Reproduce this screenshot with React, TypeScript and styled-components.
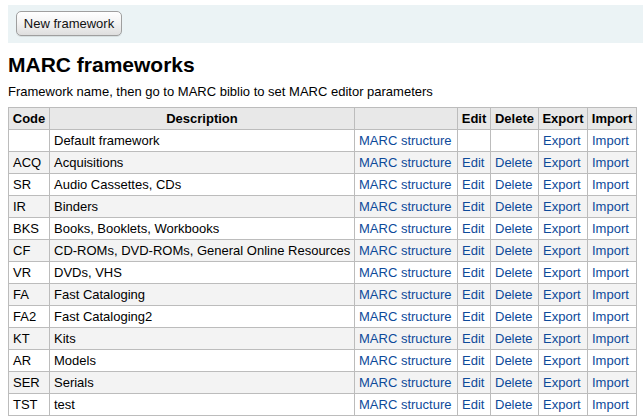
import React from "react";
import styled, { createGlobalStyle } from "styled-components";

const Global = createGlobalStyle`
  html, body { margin: 0; padding: 0; background: #fff; }
  body { font-family: "Liberation Sans", Arial, Helvetica, sans-serif; font-size: 13px; color: #000; }
`;

const Page = styled.div`
  display: flex;
  flex-direction: column;
  padding-top: 5px;
`;

const Toolbar = styled.div`
  margin-left: 8px;
  height: 38px;
  box-sizing: border-box;
  padding: 6px 8px;
  background: #ebf3f5;
  display: flex;
  align-items: flex-start;
`;

const Button = styled.button`
  height: 25px;
  width: 106px;
  box-sizing: border-box;
  border: 1px solid #9f9f9f;
  border-radius: 5px;
  background: linear-gradient(#ffffff, #f4f4f4 45%, #dedede);
  font-family: "Liberation Sans", Arial, Helvetica, sans-serif;
  font-size: 13px;
  color: #111;
  padding: 0;
  box-shadow: 0 1px 0 rgba(0, 0, 0, 0.08);
`;

const Heading = styled.h1`
  margin: 9px 0 0 8px;
  font-size: 21px;
  line-height: 25px;
  font-weight: bold;
`;

const Intro = styled.p`
  margin: 7px 0 0 8px;
  font-size: 13px;
  line-height: 16px;
`;

const Table = styled.table`
  margin: 7px 0 0 8px;
  border-collapse: collapse;
  table-layout: fixed;
  width: 628px;
  border: 1px solid #bcbcbc;
`;

const Th = styled.th`
  background: #e8e8e8;
  border: 1px solid #bcbcbc;
  font-weight: bold;
  text-align: center;
  padding: 0 3px;
  height: 21px;
  line-height: 15px;
  white-space: nowrap;
`;

const Row = styled.tr<{ $striped: boolean }>`
  height: 22px;
  background: ${(p) => (p.$striped ? "#f3f3f3" : "#ffffff")};
`;

const Td = styled.td`
  border: 1px solid #bcbcbc;
  padding: 0 4px;
  height: 21px;
  line-height: 15px;
  white-space: nowrap;
  overflow: hidden;
`;

const Link = styled.a`
  color: #0d4a9a;
  text-decoration: none;
`;

const rows: [string, string, boolean][] = [
  ["", "Default framework", false],
  ["ACQ", "Acquisitions", true],
  ["SR", "Audio Cassettes, CDs", true],
  ["IR", "Binders", true],
  ["BKS", "Books, Booklets, Workbooks", true],
  ["CF", "CD-ROMs, DVD-ROMs, General Online Resources", true],
  ["VR", "DVDs, VHS", true],
  ["FA", "Fast Cataloging", true],
  ["FA2", "Fast Cataloging2", true],
  ["KT", "Kits", true],
  ["AR", "Models", true],
  ["SER", "Serials", true],
  ["TST", "test", true],
];

const widths = [41, 305, 103, 33, 48, 49, 49];

export default function App() {
  return (
    <Page>
      <Global />
      <Toolbar>
        <Button>New framework</Button>
      </Toolbar>
      <Heading>MARC frameworks</Heading>
      <Intro>Framework name, then go to MARC biblio to set MARC editor parameters</Intro>
      <Table>
        <colgroup>
          {widths.map((w, i) => (
            <col key={i} style={{ width: w }} />
          ))}
        </colgroup>
        <thead>
          <tr>
            <Th>Code</Th>
            <Th>Description</Th>
            <Th></Th>
            <Th>Edit</Th>
            <Th>Delete</Th>
            <Th>Export</Th>
            <Th>Import</Th>
          </tr>
        </thead>
        <tbody>
          {rows.map(([code, desc, editable], i) => (
            <Row key={i} $striped={i % 2 === 1}>
              <Td>{code}</Td>
              <Td>{desc}</Td>
              <Td>
                <Link href="#">MARC structure</Link>
              </Td>
              <Td>{editable && <Link href="#">Edit</Link>}</Td>
              <Td>{editable && <Link href="#">Delete</Link>}</Td>
              <Td>
                <Link href="#">Export</Link>
              </Td>
              <Td>
                <Link href="#">Import</Link>
              </Td>
            </Row>
          ))}
        </tbody>
      </Table>
    </Page>
  );
}
